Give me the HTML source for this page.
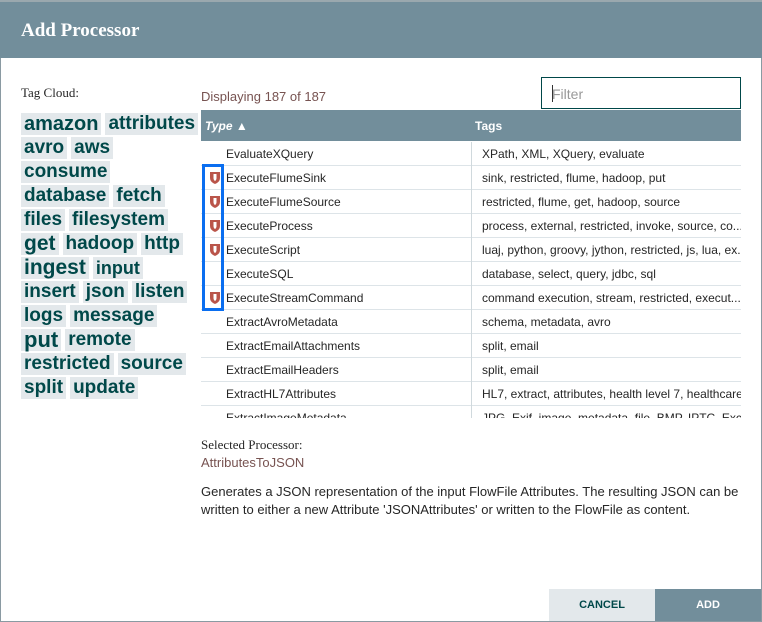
<!DOCTYPE html>
<html><head><style>
*{margin:0;padding:0;box-sizing:border-box}
body{width:762px;height:622px;background:#fff;font-family:"Liberation Sans",sans-serif;position:relative;overflow:hidden}
.top{position:absolute;left:0;top:0;width:762px;height:3px;background:#9aa8ae}
.dlg{position:absolute;left:0;top:2px;width:762px;height:620px;border:1px solid #8a9aa2;background:#fff}
.hdr{position:absolute;left:0;top:2px;width:762px;height:56px;background:#728e9b;color:#fff;font-family:"Liberation Serif",serif;font-weight:bold;font-size:19px;padding:18px 0 0 21px}
.tc{position:absolute;left:21px;top:85px;font-family:"Liberation Serif",serif;font-size:13px;color:#262626}
.cloud{position:absolute;left:21px;top:113px;width:190px}
.ln{height:24px;white-space:nowrap}
.ln span{display:inline-block;background:#e3e8eb;color:#004849;font-weight:bold;padding:0 3px;margin-right:4px;height:22px;line-height:22px;vertical-align:top;font-size:19px;letter-spacing:0}
.disp{position:absolute;left:201px;top:89px;font-size:13px;color:#775351}
.filter{position:absolute;left:541px;top:77px;width:200px;height:32px;border:1px solid #004849;font-size:14px;color:#999;padding:8px 0 0 10px}
.filter i{position:absolute;left:10px;top:7px;width:1px;height:17px;background:#333}
.th{position:absolute;left:201px;top:110px;width:540px;height:31px;background:#728e9b;color:#fff;font-size:12px;font-weight:bold}
.th .a{position:absolute;left:4px;top:9px;font-style:italic}
.th .b{position:absolute;left:274px;top:9px}
.rows{position:absolute;left:201px;top:142px;width:540px;height:276px;overflow:hidden}
.r{height:24px;border-bottom:1px solid #dde4e8;font-size:12px;color:#262626;position:relative}
.r .a{position:absolute;left:25px;top:5px}
.r .b{position:absolute;left:270px;top:0;height:24px;border-left:1px solid #d0d9dd;padding:5px 0 0 10px;white-space:nowrap;width:270px;overflow:hidden}
.sh{position:absolute;left:9px;top:6px;width:10px;height:12px}
.box{position:absolute;left:202px;top:164px;width:22px;height:147px;border:3px solid #0a6ef0}
.sel{position:absolute;left:201px;top:437px;font-family:"Liberation Serif",serif;font-size:13px;color:#262626}
.seln{position:absolute;left:201px;top:455px;font-size:13px;color:#775351}
.desc{position:absolute;left:201px;top:483px;width:540px;font-size:13px;color:#262626;line-height:18px}
.btn{position:absolute;top:589px;height:32px;font-size:11px;font-weight:bold;text-align:center;padding-top:10px}
</style></head><body>
<div class="top"></div>
<div class="dlg"></div>
<div class="hdr">Add Processor</div>
<div class="tc">Tag Cloud:</div>
<div class="cloud">
<div class="ln"><span style="font-size:20px">amazon</span><span>attributes</span></div>
<div class="ln"><span>avro</span><span>aws</span></div>
<div class="ln"><span>consume</span></div>
<div class="ln"><span>database</span><span>fetch</span></div>
<div class="ln"><span>files</span><span>filesystem</span></div>
<div class="ln"><span style="font-size:21px">get</span><span>hadoop</span><span>http</span></div>
<div class="ln"><span style="font-size:21px">ingest</span><span style="font-size:18px">input</span></div>
<div class="ln"><span>insert</span><span>json</span><span>listen</span></div>
<div class="ln"><span>logs</span><span>message</span></div>
<div class="ln"><span style="font-size:22px">put</span><span>remote</span></div>
<div class="ln"><span>restricted</span><span>source</span></div>
<div class="ln"><span>split</span><span>update</span></div>
</div>
<div class="disp">Displaying 187 of 187</div>
<div class="filter">Filter<i></i></div>
<div class="th"><span class="a">Type ▲</span><span class="b">Tags</span></div>
<div class="rows">
<div class="r"><span class="a">EvaluateXQuery</span><span class="b">XPath, XML, XQuery, evaluate</span></div>
<div class="r"><svg class="sh" viewBox="0 0 10 12"><path d="M0 0H10V6Q10 10 5 12Q0 10 0 6Z" fill="#ba554a"/><path d="M3.5 2H6.5V6Q6.5 8 5 9Q3.5 8 3.5 6Z" fill="#fff"/></svg><span class="a">ExecuteFlumeSink</span><span class="b">sink, restricted, flume, hadoop, put</span></div>
<div class="r"><svg class="sh" viewBox="0 0 10 12"><path d="M0 0H10V6Q10 10 5 12Q0 10 0 6Z" fill="#ba554a"/><path d="M3.5 2H6.5V6Q6.5 8 5 9Q3.5 8 3.5 6Z" fill="#fff"/></svg><span class="a">ExecuteFlumeSource</span><span class="b">restricted, flume, get, hadoop, source</span></div>
<div class="r"><svg class="sh" viewBox="0 0 10 12"><path d="M0 0H10V6Q10 10 5 12Q0 10 0 6Z" fill="#ba554a"/><path d="M3.5 2H6.5V6Q6.5 8 5 9Q3.5 8 3.5 6Z" fill="#fff"/></svg><span class="a">ExecuteProcess</span><span class="b">process, external, restricted, invoke, source, co...</span></div>
<div class="r"><svg class="sh" viewBox="0 0 10 12"><path d="M0 0H10V6Q10 10 5 12Q0 10 0 6Z" fill="#ba554a"/><path d="M3.5 2H6.5V6Q6.5 8 5 9Q3.5 8 3.5 6Z" fill="#fff"/></svg><span class="a">ExecuteScript</span><span class="b">luaj, python, groovy, jython, restricted, js, lua, ex...</span></div>
<div class="r"><span class="a">ExecuteSQL</span><span class="b">database, select, query, jdbc, sql</span></div>
<div class="r"><svg class="sh" viewBox="0 0 10 12"><path d="M0 0H10V6Q10 10 5 12Q0 10 0 6Z" fill="#ba554a"/><path d="M3.5 2H6.5V6Q6.5 8 5 9Q3.5 8 3.5 6Z" fill="#fff"/></svg><span class="a">ExecuteStreamCommand</span><span class="b">command execution, stream, restricted, execut...</span></div>
<div class="r"><span class="a">ExtractAvroMetadata</span><span class="b">schema, metadata, avro</span></div>
<div class="r"><span class="a">ExtractEmailAttachments</span><span class="b">split, email</span></div>
<div class="r"><span class="a">ExtractEmailHeaders</span><span class="b">split, email</span></div>
<div class="r"><span class="a">ExtractHL7Attributes</span><span class="b">HL7, extract, attributes, health level 7, healthcare</span></div>
<div class="r"><span class="a">ExtractImageMetadata</span><span class="b">JPG, Exif, image, metadata, file, BMP, IPTC, Exc</span></div>
</div>
<div class="box"></div>
<div class="sel">Selected Processor:</div>
<div class="seln">AttributesToJSON</div>
<div class="desc">Generates a JSON representation of the input FlowFile Attributes. The resulting JSON can be written to either a new Attribute 'JSONAttributes' or written to the FlowFile as content.</div>
<div class="btn" style="left:549px;width:106px;background:#e3e8eb;color:#004849">CANCEL</div>
<div class="btn" style="left:655px;width:106px;background:#728e9b;color:#fff">ADD</div>
</body></html>
